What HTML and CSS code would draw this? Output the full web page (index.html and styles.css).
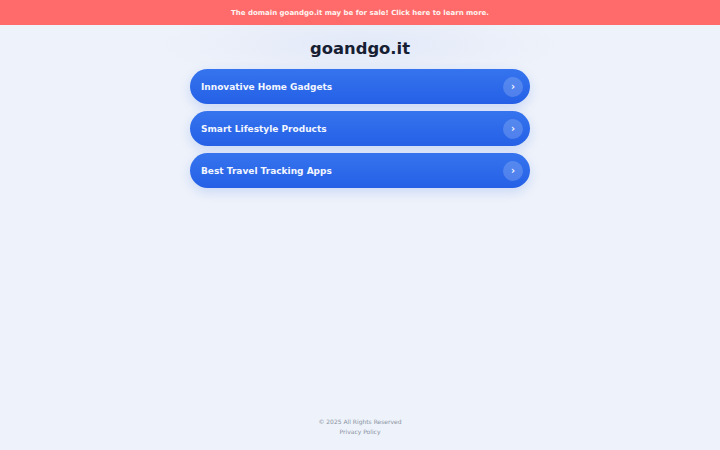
FILE: index.html
```html
<!DOCTYPE html>
<html lang="en">
<head>
<meta charset="utf-8">
<title>goandgo.it</title>
<link rel="stylesheet" href="styles.css">
</head>
<body>
<div class="page">
  <div class="banner">The domain goandgo.it may be for sale! Click here to learn more.</div>
  <main class="main">
    <h1 class="title">goandgo.it</h1>
    <div class="links">
      <a class="link" href="#"><span>Innovative Home Gadgets</span><span class="arrow">›</span></a>
      <a class="link" href="#"><span>Smart Lifestyle Products</span><span class="arrow">›</span></a>
      <a class="link" href="#"><span>Best Travel Tracking Apps</span><span class="arrow">›</span></a>
    </div>
  </main>
  <footer class="footer">
    <div>© 2025 All Rights Reserved</div>
    <div>Privacy Policy</div>
  </footer>
</div>
</body>
</html>
```
FILE: styles.css
```css
html, body { margin: 0; padding: 0; height: 100%; }
body {
  font-family: "DejaVu Sans", sans-serif;
  background: #eef2fa;
}
.page {
  min-height: 100%;
  display: flex;
  flex-direction: column;
  background: radial-gradient(ellipse 200px 40px at 50% 45px, #e2e9f8 0%, rgba(238,242,250,0) 100%), #eef2fa;
}
.banner {
  height: 25px;
  background: #ff6b6b;
  color: #fff4f0;
  font-size: 7px;
  font-weight: bold;
  display: flex;
  align-items: center;
  justify-content: center;
}
.main {
  flex: 1;
  display: flex;
  flex-direction: column;
  align-items: center;
}
.title {
  margin: 12px 0 0;
  font-size: 16.4px;
  line-height: 24px;
  color: #172033;
  font-weight: bold;
}
.links {
  margin-top: 8px;
  width: 340px;
  display: flex;
  flex-direction: column;
  gap: 7px;
}
.link {
  height: 35px;
  border-radius: 18px;
  background: linear-gradient(180deg, #3574ee 0%, #2560e6 100%);
  box-shadow: 0 4px 12px rgba(37, 99, 235, 0.18);
  display: flex;
  align-items: center;
  justify-content: space-between;
  padding: 0 7px 0 11px;
  color: #f2f6ff;
  text-decoration: none;
  font-size: 9px;
  font-weight: bold;
}
.arrow {
  width: 20px;
  height: 20px;
  border-radius: 50%;
  background: rgba(255, 255, 255, 0.18);
  display: flex;
  align-items: center;
  justify-content: center;
  font-size: 10px;
  line-height: 1;
}
.footer {
  padding-bottom: 13px;
  text-align: center;
  font-size: 6px;
  line-height: 10px;
  color: #8a93a3;
}
```
